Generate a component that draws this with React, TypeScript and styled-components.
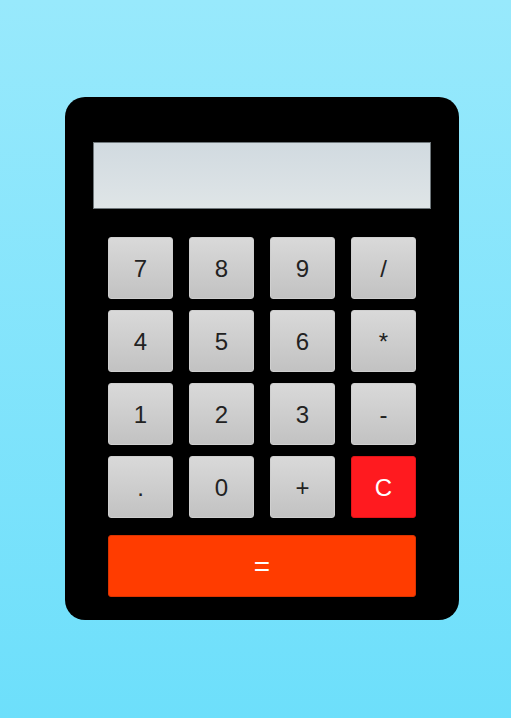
import React from "react";
import styled, { createGlobalStyle } from "styled-components";

const Global = createGlobalStyle`
  html, body { margin: 0; padding: 0; }
  body {
    min-height: 718px;
    background: linear-gradient(to bottom, #98e9fc, #6ddffb);
    font-family: "Liberation Sans", Arial, sans-serif;
  }
`;

const Page = styled.div`
  padding: 97px 0 0 65px;
`;

const Calculator = styled.div`
  width: 394px;
  box-sizing: border-box;
  background: #000;
  border-radius: 20px;
  padding: 45px 28px 23px;
  display: flex;
  flex-direction: column;
  align-items: center;
`;

const Display = styled.div`
  width: 338px;
  height: 67px;
  box-sizing: border-box;
  background: linear-gradient(to bottom, #d1dae0, #dfe5e7);
  border: 1px solid #6f777b;
  margin-bottom: 28px;
`;

const Keys = styled.div`
  display: grid;
  grid-template-columns: repeat(4, 65px);
  grid-template-rows: repeat(4, 62px) 68px;
  column-gap: 16px;
  row-gap: 11px;
`;

const Key = styled.button<{ $variant?: "num" | "clear" | "equals" }>`
  font-family: "Liberation Sans", Arial, sans-serif;
  font-size: ${(p) => (p.$variant === "equals" ? "28px" : "24px")};
  margin: 0;
  padding: 2px 0 0;
  height: 62px;
  align-self: end;
  border-radius: 3px;
  box-sizing: border-box;
  cursor: pointer;
  display: flex;
  align-items: center;
  justify-content: center;
  color: ${(p) => (p.$variant === "clear" || p.$variant === "equals" ? "#fff" : "#222")};
  background: ${(p) =>
    p.$variant === "clear"
      ? "#ff1a1f"
      : p.$variant === "equals"
      ? "#ff3c00"
      : "linear-gradient(to bottom, #d9d9d9, #c2c2c2)"};
  border: 1px solid
    ${(p) =>
      p.$variant === "clear" ? "#e01418" : p.$variant === "equals" ? "#d93300" : "#cfcfcf"};
  grid-column: ${(p) => (p.$variant === "equals" ? "1 / span 4" : "auto")};
`;

const keys = ["7", "8", "9", "/", "4", "5", "6", "*", "1", "2", "3", "-", ".", "0", "+"];

export default function App() {
  return (
    <>
      <Global />
      <Page>
        <Calculator>
          <Display />
          <Keys>
            {keys.map((k) => (
              <Key key={k} $variant="num">
                {k}
              </Key>
            ))}
            <Key $variant="clear">C</Key>
            <Key $variant="equals">=</Key>
          </Keys>
        </Calculator>
      </Page>
    </>
  );
}
